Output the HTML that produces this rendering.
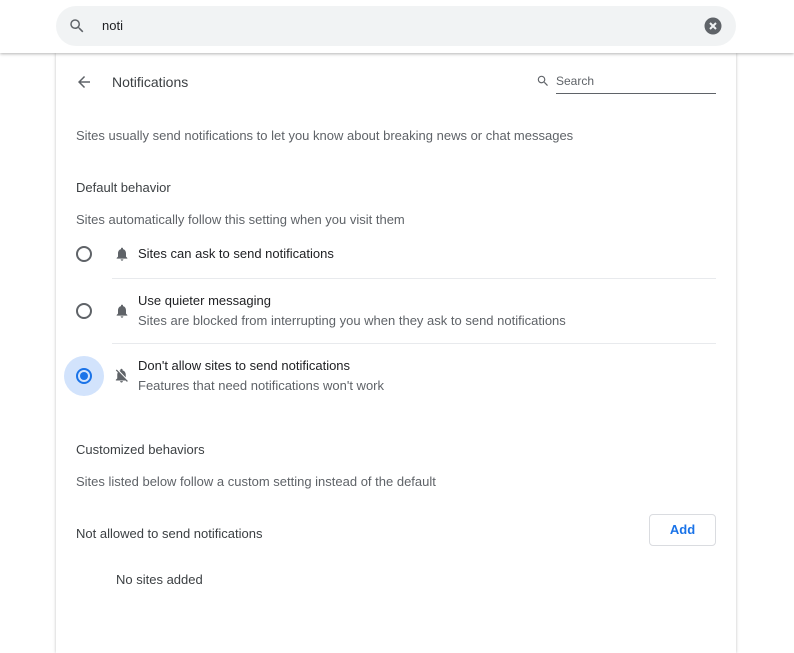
<!DOCTYPE html>
<html><head><style>
body{margin:0;width:794px;height:614px;overflow:hidden;background:#fff;font-family:"Liberation Sans",Arial,sans-serif;position:relative}
.top{position:absolute;left:0;top:0;width:794px;height:53px;background:#fff;box-shadow:0 1px 3px rgba(0,0,0,.3);z-index:2}
.pill{position:absolute;left:56px;top:6px;width:680px;height:40px;border-radius:20px;background:#f1f3f4}
.card{position:absolute;left:56px;top:53px;width:680px;height:600px;background:#fff;box-shadow:0 0 3px rgba(0,0,0,.25)}
.t{position:absolute;white-space:nowrap;font-size:13px;color:#202124}
.s{color:#5f6368}
.sep{position:absolute;left:112px;width:604px;height:1px;background:#e8eaed}
.radio{position:absolute;left:76px;width:12px;height:12px;border:2px solid #5f6368;border-radius:50%}
</style></head><body>
<div class="top"><div class="pill">
<svg style="position:absolute;left:12px;top:11px" width="18" height="18" viewBox="0 0 24 24"><path fill="#5f6368" d="M15.5 14h-.79l-.28-.27A6.47 6.47 0 0 0 16 9.5 6.5 6.5 0 1 0 9.5 16c1.61 0 3.09-.59 4.23-1.57l.27.28v.79l5 4.99L20.49 19l-4.99-5zm-6 0C7.01 14 5 11.99 5 9.5S7.01 5 9.5 5 14 7.01 14 9.5 11.99 14 9.5 14z"/></svg>
<div class="t" style="left:46px;top:12px">noti</div>
<svg style="position:absolute;left:648px;top:11px" width="18" height="18" viewBox="0 0 18 18"><circle cx="9" cy="9" r="8.5" fill="#5f6368"/><path d="M6 6l6 6M12 6l-6 6" stroke="#f1f3f4" stroke-width="2"/></svg>
</div></div>
<div class="card"></div>
<svg style="position:absolute;left:75px;top:73px" width="18" height="18" viewBox="0 0 24 24"><path fill="#5f6368" d="M20 11H7.83l5.59-5.59L12 4l-8 8 8 8 1.41-1.41L7.83 13H20v-2z"/></svg>
<div class="t" style="left:112px;top:74px;font-size:14px;color:#3c4043">Notifications</div>
<svg style="position:absolute;left:536px;top:74px" width="14" height="14" viewBox="0 0 24 24"><path fill="#5f6368" d="M15.5 14h-.79l-.28-.27A6.47 6.47 0 0 0 16 9.5 6.5 6.5 0 1 0 9.5 16c1.61 0 3.09-.59 4.23-1.57l.27.28v.79l5 4.99L20.49 19l-4.99-5zm-6 0C7.01 14 5 11.99 5 9.5S7.01 5 9.5 5 14 7.01 14 9.5 11.99 14 9.5 14z"/></svg>
<div class="t s" style="left:556px;top:74px;font-size:12px">Search</div>
<div style="position:absolute;left:556px;top:93px;width:160px;height:1px;background:#5f6368"></div>
<div class="t s" style="left:76px;top:128px">Sites usually send notifications to let you know about breaking news or chat messages</div>
<div class="t" style="left:76px;top:180px;color:#3c4043">Default behavior</div>
<div class="t s" style="left:76px;top:212px">Sites automatically follow this setting when you visit them</div>
<div class="radio" style="top:246px"></div>
<svg style="position:absolute;left:114px;top:246px" width="16" height="16" viewBox="0 0 24 24"><path fill="#5f6368" d="M12 22c1.1 0 2-.9 2-2h-4c0 1.1.9 2 2 2zm6-6v-5c0-3.07-1.63-5.64-4.5-6.32V4c0-.83-.67-1.5-1.5-1.5s-1.5.67-1.5 1.5v.68C7.64 5.36 6 7.92 6 11v5l-2 2v1h16v-1l-2-2z"/></svg>
<div class="t" style="left:138px;top:246px">Sites can ask to send notifications</div>
<div class="sep" style="top:278px"></div>
<div class="radio" style="top:303px"></div>
<svg style="position:absolute;left:114px;top:303px" width="16" height="16" viewBox="0 0 24 24"><path fill="#5f6368" d="M12 22c1.1 0 2-.9 2-2h-4c0 1.1.9 2 2 2zm6-6v-5c0-3.07-1.63-5.64-4.5-6.32V4c0-.83-.67-1.5-1.5-1.5s-1.5.67-1.5 1.5v.68C7.64 5.36 6 7.92 6 11v5l-2 2v1h16v-1l-2-2z"/></svg>
<div class="t" style="left:138px;top:293px">Use quieter messaging</div>
<div class="t s" style="left:138px;top:313px">Sites are blocked from interrupting you when they ask to send notifications</div>
<div class="sep" style="top:343px"></div>
<div style="position:absolute;left:64px;top:356px;width:40px;height:40px;border-radius:50%;background:#d2e3fc"></div>
<div style="position:absolute;left:76px;top:368px;width:12px;height:12px;border:2px solid #1a73e8;border-radius:50%"></div>
<div style="position:absolute;left:80px;top:372px;width:8px;height:8px;background:#1a73e8;border-radius:50%"></div>
<svg style="position:absolute;left:113px;top:367px" width="17" height="17" viewBox="0 0 24 24"><path fill="#5f6368" d="M20 18.69L7.84 6.14 5.27 3.49 4 4.76l2.8 2.8v.01c-.52.99-.8 2.16-.8 3.42v5l-2 2v1h13.73l2 2L21 19.72l-1-1.03zM12 22c1.11 0 2-.89 2-2h-4c0 1.11.89 2 2 2zm6-7.32V11c0-3.08-1.64-5.64-4.5-6.32V4c0-.83-.67-1.5-1.5-1.5s-1.5.67-1.5 1.5v.68c-.15.03-.29.08-.42.12-.1.03-.2.07-.3.11h-.01c-.01 0-.01 0-.02.01-.23.09-.46.2-.68.31 0 0-.01 0-.01.01L18 14.68z"/></svg>
<div class="t" style="left:138px;top:358px">Don't allow sites to send notifications</div>
<div class="t s" style="left:138px;top:378px">Features that need notifications won't work</div>
<div class="t" style="left:76px;top:442px;color:#3c4043">Customized behaviors</div>
<div class="t s" style="left:76px;top:474px">Sites listed below follow a custom setting instead of the default</div>
<div class="t" style="left:76px;top:526px;color:#3c4043">Not allowed to send notifications</div>
<div style="position:absolute;left:649px;top:514px;width:65px;height:30px;border:1px solid #dadce0;border-radius:4px;color:#1a73e8;font-size:13px;font-weight:bold;text-align:center;line-height:30px">Add</div>
<div class="t" style="left:116px;top:572px;color:#3c4043">No sites added</div>
</body></html>
